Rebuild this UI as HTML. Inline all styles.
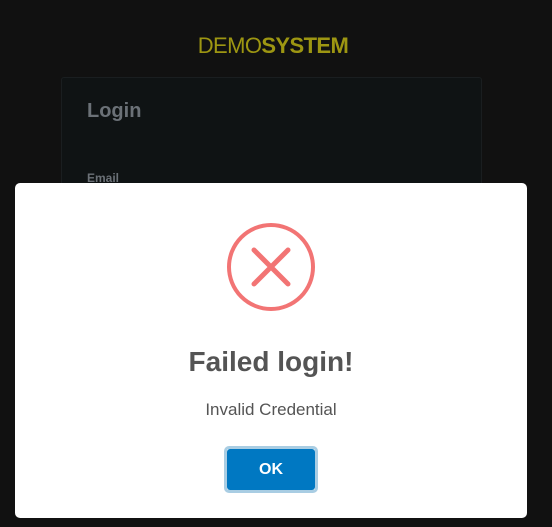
<!DOCTYPE html>
<html><head><style>
body{margin:0;width:552px;height:527px;background:#111;overflow:hidden;position:relative;font-family:"Liberation Sans",sans-serif}
.logo{position:absolute;top:33px;left:0;width:546px;text-align:center;font-size:22px;color:#9d9612;letter-spacing:-0.6px}
.logo b{font-weight:bold}
.card{position:absolute;left:61px;top:77px;width:419px;height:300px;background:#0f1314;border:1px solid #1a1e20;border-radius:3px}
.card h2{position:absolute;left:25px;top:22px;margin:0;font-size:20px;color:#6b7177;font-weight:bold}
.card .em{position:absolute;left:25px;top:93px;font-size:12px;color:#6b7177;font-weight:bold}
.modal{position:absolute;left:15px;top:183px;width:512px;height:335px;background:#fff;border-radius:5px}
.t{position:absolute;top:163px;width:512px;text-align:center;font-size:28px;color:#545454;font-weight:600}
.s{position:absolute;top:217px;width:512px;text-align:center;font-size:17px;color:#545454}
.btn{position:absolute;left:209px;top:263px;width:94px;height:47px;box-sizing:border-box;border:3px solid #a9cde3;border-radius:5px;}
.btn div{position:absolute;inset:0;background:#0078c2;border-radius:3px;color:#fff;font-weight:bold;font-size:16px;text-align:center;line-height:41px}
</style></head><body>
<div class="logo">DEMO<b>SYSTEM</b></div>
<div class="card"><h2>Login</h2><div class="em">Email</div></div>
<div class="modal">
<svg style="position:absolute;left:210px;top:38px" width="92" height="92" viewBox="0 0 92 92">
<circle cx="46" cy="46" r="42" fill="none" stroke="#f27474" stroke-width="4"/>
<path d="M29 29L63 63M63 29L29 63" stroke="#f27474" stroke-width="5" stroke-linecap="round"/>
</svg>
<div class="t">Failed login!</div>
<div class="s">Invalid Credential</div>
<div class="btn"><div>OK</div></div>
</div>
</body></html>
